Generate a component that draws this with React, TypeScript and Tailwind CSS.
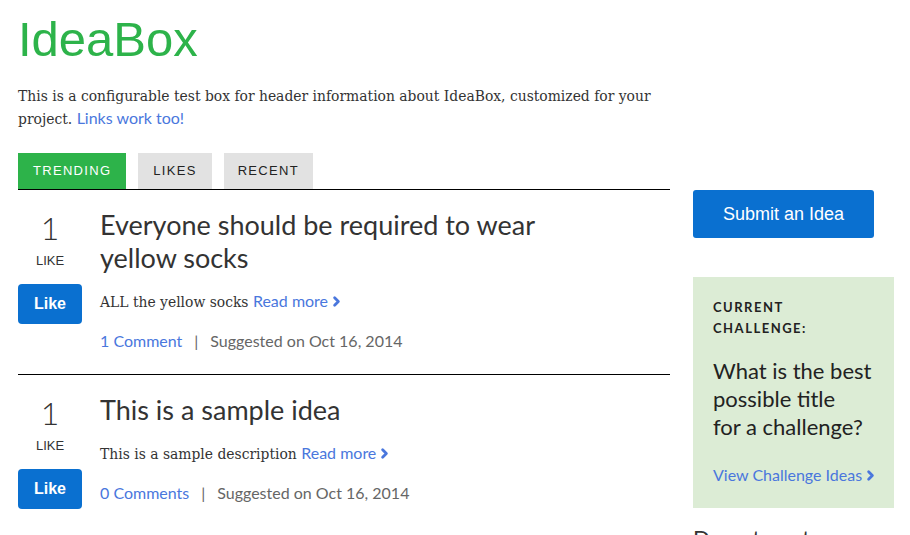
import { ChevronRight } from 'lucide-react';

const sans = "font-['Liberation_Sans',Arial,sans-serif]";
const serif = "font-['DejaVu_Serif',Georgia,serif]";
const soft = "font-['Lato','Noto_Sans',sans-serif]";

const ideas = [
  {
    likes: 1,
    title: 'Everyone should be required to wear yellow socks',
    body: 'ALL the yellow socks',
    comments: '1 Comment',
    date: 'Oct 16, 2014',
  },
  {
    likes: 1,
    title: 'This is a sample idea',
    body: 'This is a sample description',
    comments: '0 Comments',
    date: 'Oct 16, 2014',
  },
];

export default function App() {
  return (
    <div className="w-[910px] h-[535px] overflow-hidden bg-white pl-[18px] pt-[11px]">
      {/* Header */}
      <h1 className={`${sans} text-[49px] leading-[56px] text-[#2db34a]`}>IdeaBox</h1>
      <p className={`${serif} mt-[19px] w-[660px] text-[13.9px] leading-[21px] text-[#333]`}>
        This is a configurable test box for header information about IdeaBox, customized for your project.{' '}
        <a href="#" className={`${soft} text-[16px] text-[#4a77dd]`}>Links work too!</a>
      </p>

      <div className="mt-[23px] flex gap-[23px]">
        {/* Main column */}
        <div className="w-[652px]">
          <div className={`${sans} flex gap-[12px] border-b border-black text-[13px] tracking-[1.3px]`}>
            <button className="h-[36px] px-[15px] bg-[#2db34a] text-white">TRENDING</button>
            <button className="h-[36px] px-[15px] bg-[#e2e2e2] text-[#222]">LIKES</button>
            <button className="h-[36px] px-[14px] bg-[#e2e2e2] text-[#222]">RECENT</button>
          </div>

          {ideas.map((idea, i) => (
            <div
              key={i}
              className={`flex gap-[18px] pt-[18px] ${i === 0 ? 'pb-[23px] border-b border-black' : ''}`}
            >
              <div className="w-[64px] flex flex-col items-center">
                <div className={`${soft} mt-[2px] font-light text-[32px] leading-[36px] text-[#333]`}>{idea.likes}</div>
                <div className={`${sans} mt-[7px] text-[13px] leading-[16px] text-[#333]`}>LIKE</div>
                <button className={`${sans} mt-[15px] w-[64px] h-[40px] rounded-[4px] bg-[#0a70d0] text-white font-bold text-[16px]`}>
                  Like
                </button>
              </div>
              <div className="flex-1">
                <h2 className={`${soft} w-[470px] text-[27px] leading-[33px] text-[#333]`}>{idea.title}</h2>
                <p className={`${serif} mt-[17px] text-[13.9px] leading-[20px] text-[#333]`}>
                  {idea.body}{' '}
                  <a href="#" className={`${soft} text-[16px] text-[#4a77dd] inline-flex items-center`}>
                    Read more
                    <ChevronRight size={15} strokeWidth={4.5} className="ml-[1px]" />
                  </a>
                </p>
                <div className={`${soft} mt-[19px] text-[16px] leading-[20px] text-[#666]`}>
                  <a href="#" className="text-[#4a77dd]">{idea.comments}</a>
                  <span className="mx-[12px]">|</span>
                  Suggested on {idea.date}
                </div>
              </div>
            </div>
          ))}
        </div>

        {/* Sidebar */}
        <div className="w-[201px] pt-[37px]">
          <button className={`${sans} w-[181px] h-[48px] rounded-[3px] bg-[#0a70d0] text-white text-[18px]`}>
            Submit an Idea
          </button>
          <div className="mt-[39px] h-[231px] bg-[#dcecd5] pl-[20px] pr-[10px] pt-[20px]">
            <div className={`${soft} font-bold text-[13px] leading-[21px] tracking-[1.5px] text-[#222]`}>
              CURRENT
              <br />
              CHALLENGE:
            </div>
            <p className={`${soft} mt-[18px] text-[22px] leading-[28px] text-[#222]`}>
              What is the best
              <br />
              possible title
              <br />
              for a challenge?
            </p>
            <a
              href="#"
              className={`${soft} mt-[22px] inline-flex items-center whitespace-nowrap text-[16px] text-[#4a77dd]`}
            >
              View Challenge Ideas
              <ChevronRight size={15} strokeWidth={4.5} className="ml-[1px]" />
            </a>
          </div>
          <h3 className={`${soft} mt-[13px] text-[22px] text-[#333]`}>Departments</h3>
        </div>
      </div>
    </div>
  );
}
